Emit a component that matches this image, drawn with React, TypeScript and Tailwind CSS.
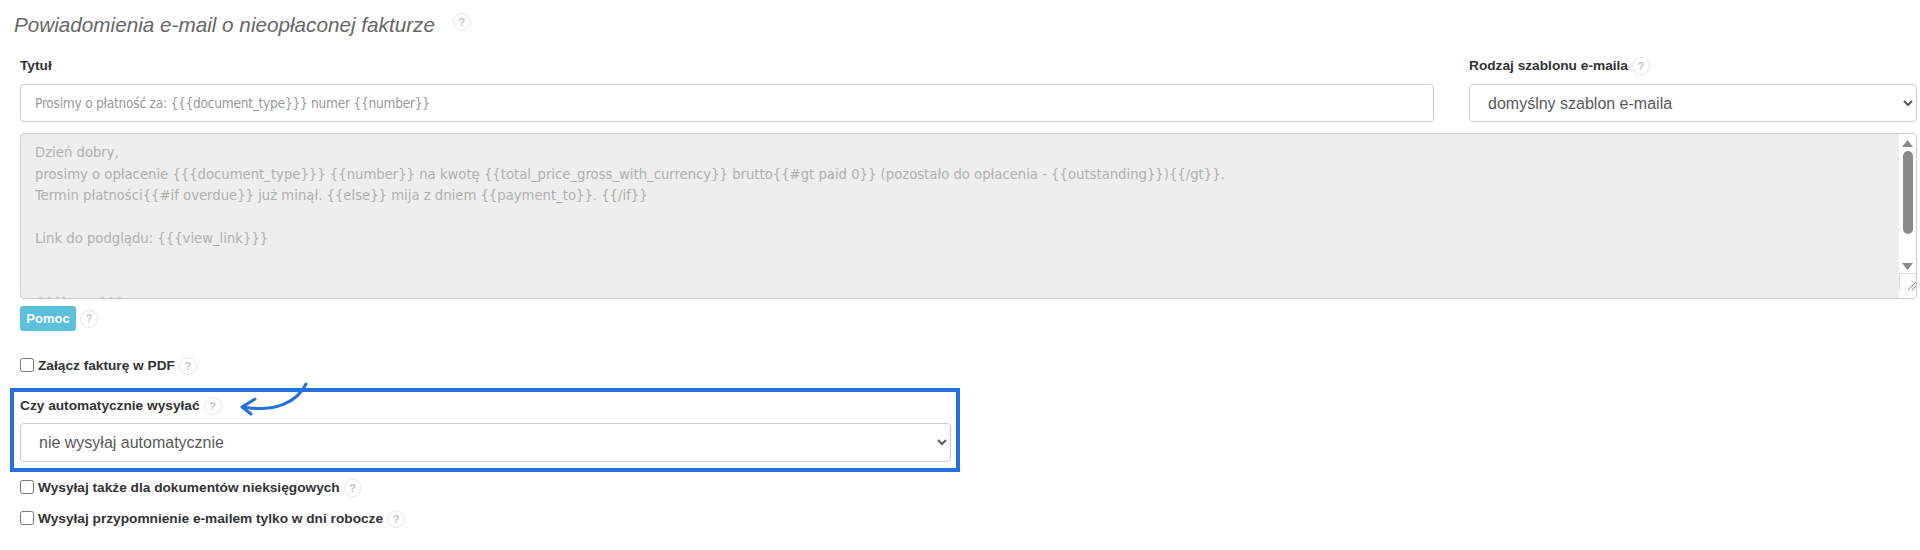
const arial = "font-['Liberation_Sans',Arial,sans-serif]";

const bodyText = `Dzień dobry,
prosimy o opłacenie {{{document_type}}} {{number}} na kwotę {{total_price_gross_with_currency}} brutto{{#gt paid 0}} (pozostało do opłacenia - {{outstanding}}){{/gt}}.
Termin płatności{{#if overdue}} już minął. {{else}} mija z dniem {{payment_to}}. {{/if}}

Link do podglądu: {{{view_link}}}


{{{footer}}}`;

function HelpIcon({ className = '' }: { className?: string }) {
  return (
    <span className={`inline-flex h-[18px] w-[18px] shrink-0 items-center justify-center rounded-full border border-[#e6e6e6] bg-white text-[11px] leading-none font-bold text-[#c4c4c4] ${className}`}>
      ?
    </span>
  );
}

function CheckRow({ label, className = '' }: { label: string; className?: string }) {
  return (
    <label className={`flex h-5 items-center text-[13.7px] font-bold text-[#333] ${className}`}>
      <input type="checkbox" className="mr-[4px] h-[14px] w-[14px] -translate-y-[1px]" />
      {label}
      <HelpIcon className="ml-[4px]" />
    </label>
  );
}

function FakeScrollbar() {
  return (
    <div className="flex w-[17px] shrink-0 flex-col items-center bg-white">
      <svg className="mt-[6px] shrink-0" width="11" height="7" viewBox="0 0 11 7">
        <path d="M5.5 0 L11 7 L0 7 Z" fill="#8a8a8a" />
      </svg>
      <div className="mt-[4px] h-[83px] w-[10px] rounded-[5px] bg-[#8a8a8a]" />
      <svg className="mt-[29px] shrink-0" width="11" height="7" viewBox="0 0 11 7">
        <path d="M0 0 L11 0 L5.5 7 Z" fill="#8a8a8a" />
      </svg>
      <div className="relative mt-[3px] h-[17px] w-[17px] border-t border-l border-[#dcdcdc]">
        <svg className="absolute right-0 bottom-0" width="10" height="10" viewBox="0 0 10 10">
          <path d="M2 10 L10 2 M6 10 L10 6" stroke="#8a8a8a" strokeWidth="1" />
        </svg>
      </div>
    </div>
  );
}

export default function App() {
  return (
    <div className={`h-[550px] overflow-hidden bg-white pt-[11px] pr-[3px] pl-[20px] ${arial}`}>
      <div className="-ml-[6px] flex h-7 items-center">
        <h2 className="text-[20.7px] font-normal text-[#666] italic">Powiadomienia e-mail o nieopłaconej fakturze</h2>
        <HelpIcon className="ml-[18px] -translate-y-[3px]" />
      </div>

      <div className="mt-[17px] flex gap-[35px]">
        <div className="flex-1">
          <div className="flex h-5 items-center text-[13.7px] font-bold text-[#333]">Tytuł</div>
          <input
            readOnly
            value="Prosimy o płatność za: {{{document_type}}} numer {{number}}"
            className="mt-2 h-[38px] w-full rounded-[4px] border border-[#ccc] bg-white px-[14px] font-['DejaVu_Sans_Condensed','DejaVu_Sans',sans-serif] text-[13.6px] tracking-[-0.25px] text-[#999] outline-none"
          />
        </div>
        <div className="w-[448px]">
          <div className="flex h-5 items-center text-[13.7px] font-bold text-[#333]">
            Rodzaj szablonu e-maila
            <HelpIcon className="ml-[4px]" />
          </div>
          <select className="mt-2 h-[38px] w-full rounded-[4px] border border-[#ccc] bg-white px-[14px] text-[16px] text-[#5a5a5a] outline-none">
            <option>domyślny szablon e-maila</option>
          </select>
        </div>
      </div>

      <div className="mt-[11px] flex h-[166px] overflow-hidden rounded-[4px] border border-[#ccc] bg-[#eee]">
        <textarea
          disabled
          value={bodyText}
          className="h-full flex-1 resize-none overflow-hidden bg-transparent pt-[7px] pl-[14px] font-['DejaVu_Sans_Condensed','DejaVu_Sans',sans-serif] text-[14.7px] leading-[21.5px] text-[#b0b0b0] outline-none"
        />
        <FakeScrollbar />
      </div>

      <div className="mt-[7px] flex items-center">
        <button className="h-[25px] w-[56px] rounded-[3px] bg-[#5bc0de] text-[13px] font-bold text-white">Pomoc</button>
        <HelpIcon className="ml-[4px]" />
      </div>

      <CheckRow label="Załącz fakturę w PDF" className="mt-[25px]" />

      <div className="relative mt-[12px] -ml-[10px] h-[84px] w-[950px] border-4 border-[#2470dc] pt-1 pl-[6px]">
        <div className="flex h-5 items-center text-[13.7px] font-bold text-[#333]">
          Czy automatycznie wysyłać
          <HelpIcon className="ml-[4px]" />
        </div>
        <select className="mt-[7px] h-[39px] w-[931px] rounded-[4px] border border-[#ccc] bg-white px-[14px] text-[16px] text-[#5a5a5a] outline-none">
          <option>nie wysyłaj automatycznie</option>
        </select>
        <svg className="absolute top-[-11px] left-[222px]" width="76" height="38" viewBox="0 0 76 38" fill="none">
          <path d="M70 3 C62 20 40 32 7 26" stroke="#2470dc" strokeWidth="3" strokeLinecap="round" />
          <path d="M19 18 L6 26 L15 33" stroke="#2470dc" strokeWidth="3" strokeLinecap="round" strokeLinejoin="round" />
        </svg>
      </div>

      <CheckRow label="Wysyłaj także dla dokumentów nieksięgowych" className="mt-[6px]" />
      <CheckRow label="Wysyłaj przypomnienie e-mailem tylko w dni robocze" className="mt-[11px]" />
    </div>
  );
}
